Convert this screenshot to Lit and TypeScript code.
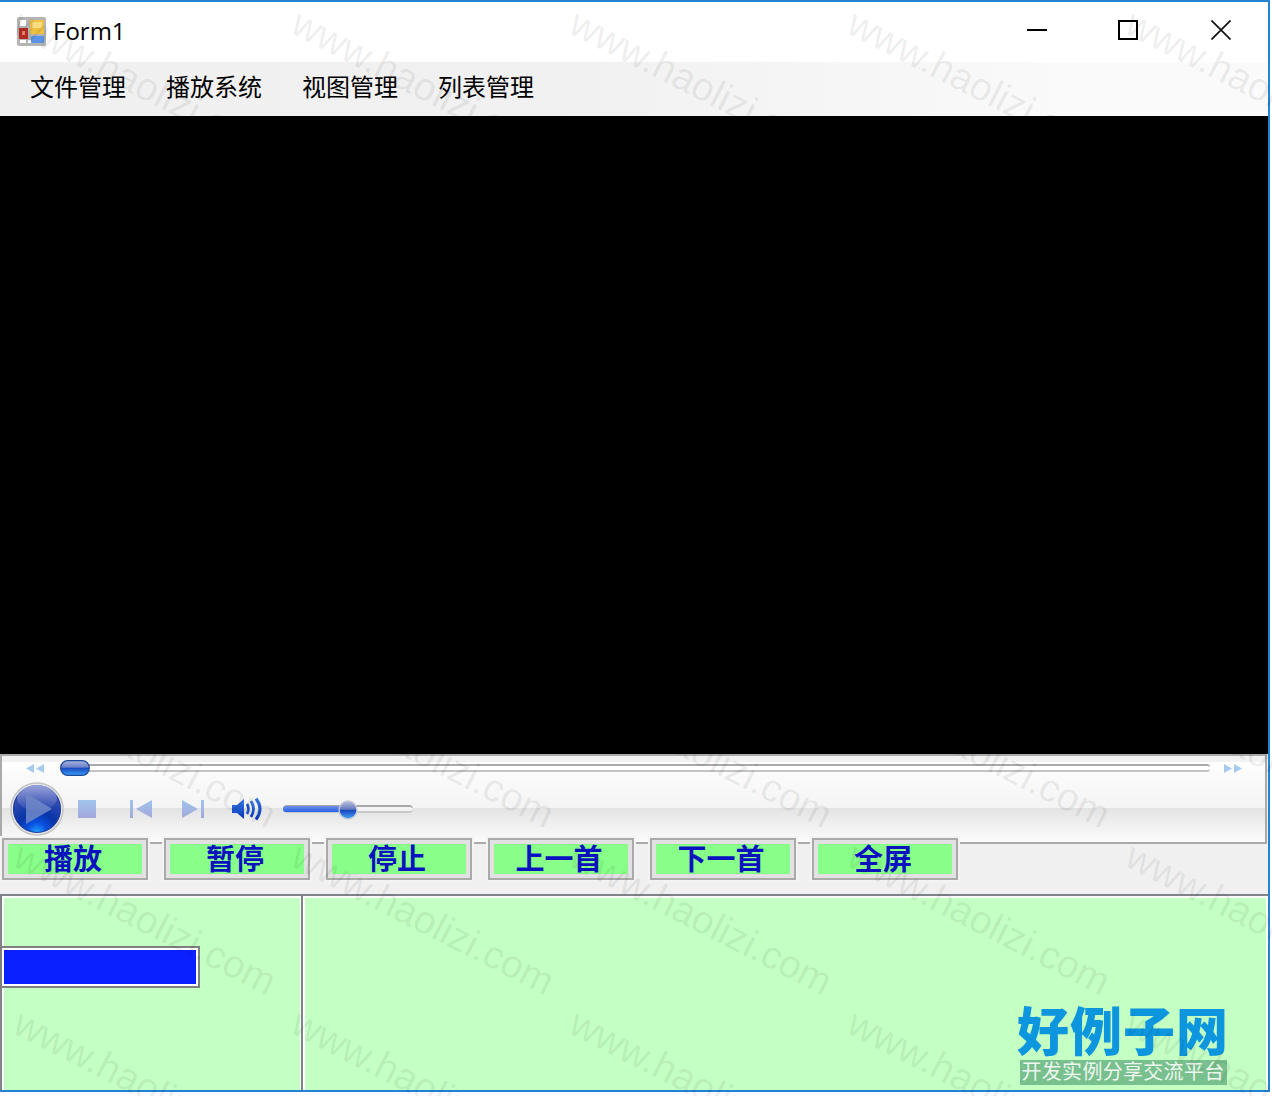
import { LitElement, html, css, svg } from "lit";
import { customElement } from "lit/decorators.js";

const MENUS = ["文件管理", "播放系统", "视图管理", "列表管理"];
const BUTTONS = ["播放", "暂停", "停止", "上一首", "下一首", "全屏"];

const marks: { x: number; y: number }[] = [];
for (const j of [0, 4, 5, 6]) {
  for (let i = 0; i < 5; i++) {
    marks.push({ x: 27 + 278 * i, y: 0 + 166.6 * j });
  }
}

@customElement("app-root")
export class AppRoot extends LitElement {
  static styles = css`
    :host { display: block; position: relative; width: 1272px; height: 1096px; background: #fff; overflow: hidden; }
    .window { width: 1270px; height: 1092px; box-sizing: border-box; border-top: 2px solid #2283d3; border-right: 2px solid #2283d3; border-bottom: 2px solid #2283d3; display: flex; flex-direction: column; background: #f0f0f0; position: relative; }
    .title { height: 60px; flex: none; background: #fff; display: flex; align-items: center; padding: 0 37px 2px 17px; box-sizing: border-box; }
    .title .appicon { width: 29px; height: 29px; flex: none; }
    .title .name { font: 24px "Open Sans", "Noto Sans", sans-serif; color: #000; margin-left: 7px; flex: 1; line-height: 30px; }
    .wc { display: flex; align-items: center; margin-bottom: 2px; }
    .wc svg { display: block; width: 20px; height: 20px; }
    .wc .max { margin-left: 71px; }
    .wc .close { margin-left: 73px; }
    .menu { height: 54px; flex: none; box-sizing: border-box; display: flex; gap: 40px; align-items: center; padding: 0 0 6px 30px; background: linear-gradient(90deg, #f0f0f0 0, #f1f1f1 45%, #fafafa 85%, #fafafa 100%); }
    .menu span { font: 24px/30px "Noto Sans CJK SC", sans-serif; color: #000; width: 96px; white-space: nowrap; }
    .video { height: 638px; flex: none; background: #000; }
    .player { height: 90px; flex: none; box-sizing: border-box; margin-right: 1px; border: 2px solid #aaa; background: linear-gradient(180deg, #f2f2f2 0, #f2f2f2 6px, #fff 6px, #fbfbfb 18px, #f4f4f4 52px, #e3e3e3 52px, #fcfcfc 86px); display: flex; flex-direction: column; }
    .seek { height: 24px; flex: none; display: flex; align-items: center; padding: 0 23px 0 24px; gap: 16px; }
    .seek > svg { width: 18px; height: 9px; flex: none; display: block; }
    .track { flex: 1; height: 4px; border-top: 2px solid #aaa; border-bottom: 2px solid #c4c4c4; background: #fff; border-radius: 3px; position: relative; margin-right: -2px; }
    .thumb { position: absolute; left: 0; top: -6px; width: 30px; height: 16px; display: block; }
    .controls { flex: 1; display: flex; align-items: center; padding: 0 0 4px 8px; }
    .controls > svg { display: block; flex: none; }
    .controls .stop { margin-left: 14px; }
    .controls .prev { margin-left: 34px; }
    .controls .next { margin-left: 30px; }
    .controls .vol { margin-left: 28px; }
    .volbar { margin-left: 21px; width: 130px; height: 4px; border-top: 2px solid #a8a8a8; border-bottom: 2px solid #c8c8c8; border-radius: 4px; background: #f4f4f4; position: relative; }
    .volfill { position: absolute; left: 0; top: -1px; height: 6px; width: 62px; background: linear-gradient(180deg, #6a90e8, #2a60e8); border-radius: 3px 0 0 3px; }
    .volthumb { position: absolute; left: 55px; top: -7px; width: 20px; height: 20px; }
    .buttons { height: 50px; flex: none; display: flex; gap: 16px; padding-left: 2px; position: relative; background: #f0f0f0; }
    .btn { width: 146px; height: 42px; margin-top: -6px; box-sizing: border-box; border: 2px solid #aaa; background: #e1e1e1; padding: 4px; outline: 2px solid #f3f3f3; display: flex; }
    .btn span { flex: 1; background: #88ff88; color: #0a12c0; font: 700 29px/27px "Noto Sans CJK SC", sans-serif; text-align: center; padding-right: 4px; white-space: nowrap; }
    .panels { height: 196px; flex: none; display: flex; }
    .panel { box-sizing: border-box; border-left: 2px solid #808488; border-top: 2px solid #808488; display: flex; }
    .panel.left { width: 301px; flex: none; }
    .panel.right { flex: 1; }
    .fill { flex: 1; background: #c4ffc4; border-left: 2px solid #fff; border-top: 2px solid #fff; }
    .left .fill { border-right: 1px solid #fff; }
    .right .fill { border-right: 2px solid #fff; }
    .progress { box-sizing: border-box; width: 200px; height: 42px; margin: 48px 0 0 -4px; border: 2px solid #808080; padding: 2px; background: #fff; }
    .progress div { height: 100%; background: #0a20ff; }
    .logo { position: absolute; left: 1018px; top: 1001px; width: 210px; display: flex; flex-direction: column; align-items: center; }
    .logo b { font: 900 52px/56px "Noto Sans CJK SC", sans-serif; color: #0d96de; white-space: nowrap; letter-spacing: 1px; }
    .logo i { font: 400 20px/21px "Noto Sans CJK SC", sans-serif; font-style: normal; color: #eef8ee; background: rgba(60, 140, 100, 0.55); width: 207px; height: 25px; margin-top: 3px; text-align: center; white-space: nowrap; letter-spacing: 0.3px; }
    .wm { position: absolute; inset: 0; overflow: hidden; pointer-events: none; }
    .wm span { position: absolute; font: 39px/46px "Liberation Sans", sans-serif; color: rgba(0, 0, 0, 0.08); white-space: nowrap; transform: rotate(27deg); transform-origin: 0 0; }
  `;

  private play() {
    return svg`<svg class="playbtn" width="54" height="54" viewBox="0 0 54 54">
      <defs>
        <radialGradient id="pg" cx="50%" cy="100%" r="85%">
          <stop offset="0" stop-color="#22a4ff"/><stop offset=".25" stop-color="#0a50e0"/><stop offset=".5" stop-color="#0634a8"/><stop offset="1" stop-color="#3a50b0"/>
        </radialGradient>
        <linearGradient id="ph" x1="0" y1="0" x2="0" y2="1">
          <stop offset="0" stop-color="#b4bce8" stop-opacity=".8"/><stop offset="1" stop-color="#6878c8" stop-opacity=".2"/>
        </linearGradient>
      </defs>
      <circle cx="27" cy="27" r="26" fill="#ececec" stroke="#c4c4c4" stroke-width="1.5"/>
      <circle cx="27" cy="27" r="23.5" fill="url(#pg)" stroke="#1c3c9c" stroke-width="1.2"/>
      <ellipse cx="27" cy="16" rx="20" ry="13" fill="url(#ph)"/>
      <path d="M16 11 L42 27 L16 42 Z" fill="#7088c8" opacity=".85"/>
    </svg>`;
  }

  render() {
    return html`
      <div class="window">
        <div class="title">
          <svg class="appicon" viewBox="0 0 29 29">
            <rect width="29" height="29" rx="2" fill="#b4b4b4"/>
            <rect x="3" y="3" width="6" height="6" fill="#fff"/>
            <rect x="3" y="23" width="6" height="3" fill="#fff"/>
            <rect x="11" y="23" width="4" height="3" fill="#fff"/>
            <rect x="2" y="11" width="9" height="11" fill="#b52a22"/>
            <rect x="5" y="14" width="3" height="4" fill="#e08070"/>
            <rect x="13" y="3" width="14" height="14" fill="#f0c040"/>
            <rect x="15" y="5" width="10" height="6" fill="#f8dc80"/>
            <rect x="14" y="19" width="13" height="7" rx="1" fill="#5a94e8"/>
          </svg>
          <span class="name">Form1</span>
          <div class="wc">
            <svg viewBox="0 0 20 20"><rect x="0" y="9" width="20" height="2" fill="#000"/></svg>
            <svg class="max" viewBox="0 0 20 20"><rect x="1" y="1" width="18" height="18" fill="none" stroke="#000" stroke-width="2"/></svg>
            <svg class="close" viewBox="0 0 20 20"><path d="M.5 .5 L19.5 19.5 M19.5 .5 L.5 19.5" stroke="#111" stroke-width="1.7" fill="none"/></svg>
          </div>
        </div>
        <div class="menu">${MENUS.map((m) => html`<span>${m}</span>`)}</div>
        <div class="video"></div>
        <div class="player">
          <div class="seek">
            <svg viewBox="0 0 18 9"><path d="M8 0 V9 L0 4.5 Z M18 0 V9 L10 4.5 Z" fill="#a6cbf0"/></svg>
            <div class="track">
              <svg class="thumb" viewBox="0 0 30 16">
                <defs><linearGradient id="tg" x1="0" y1="0" x2="0" y2="1">
                  <stop offset="0" stop-color="#a8b4e0"/><stop offset=".45" stop-color="#6a80c8"/><stop offset=".5" stop-color="#1a48c0"/><stop offset="1" stop-color="#3a9cf4"/>
                </linearGradient></defs>
                <rect x=".7" y=".7" width="28.6" height="14.6" rx="7" fill="url(#tg)" stroke="#1c4a9c" stroke-width="1.2"/>
              </svg>
            </div>
            <svg viewBox="0 0 18 9"><path d="M0 0 V9 L8 4.5 Z M10 0 V9 L18 4.5 Z" fill="#a6cbf0"/></svg>
          </div>
          <div class="controls">
            ${this.play()}
            <svg class="stop" width="18" height="18" viewBox="0 0 18 18">
              <defs><linearGradient id="ic" x1="0" y1="0" x2="0" y2="1"><stop offset="0" stop-color="#9fc4ec"/><stop offset="1" stop-color="#a4a8dc"/></linearGradient></defs>
              <rect width="18" height="18" fill="url(#ic)"/>
            </svg>
            <svg class="prev" width="22" height="18" viewBox="0 0 22 18"><path d="M0 0 H3 V18 H0 Z M22 0 V18 L6 9 Z" fill="url(#ic)"/></svg>
            <svg class="next" width="22" height="18" viewBox="0 0 22 18"><path d="M0 0 L16 9 L0 18 Z M19 0 H22 V18 H19 Z" fill="url(#ic)"/></svg>
            <svg class="vol" width="30" height="24" viewBox="0 0 30 24">
              <defs><linearGradient id="vg" x1="0" y1="0" x2="0" y2="1"><stop offset="0" stop-color="#3a7ae8"/><stop offset="1" stop-color="#0838b8"/></linearGradient></defs>
              <path d="M0 8 H5 L12 2 V22 L5 16 H0 Z" fill="url(#vg)"/>
              <path d="M15 7 Q18 12 15 17" fill="none" stroke="#1a50c8" stroke-width="2.6"/>
              <path d="M19 4 Q24 12 19 20" fill="none" stroke="url(#vg)" stroke-width="2.8"/>
              <path d="M24 1.5 Q32 12 24 22.5" fill="none" stroke="url(#vg)" stroke-width="3"/>
            </svg>
            <div class="volbar">
              <div class="volfill"></div>
              <svg class="volthumb" viewBox="0 0 20 20">
                <defs><linearGradient id="vt" x1="0" y1="0" x2="0" y2="1"><stop offset="0" stop-color="#b8bce0"/><stop offset=".45" stop-color="#6a7cc0"/><stop offset=".52" stop-color="#1848c0"/><stop offset="1" stop-color="#40a8f8"/></linearGradient></defs>
                <circle cx="10" cy="10" r="9" fill="url(#vt)" stroke="#c8c8d8" stroke-width="1.4"/>
              </svg>
            </div>
          </div>
        </div>
        <div class="buttons">${BUTTONS.map((b) => html`<div class="btn"><span>${b}</span></div>`)}</div>
        <div class="panels">
          <div class="panel left"><div class="fill"><div class="progress"><div></div></div></div></div>
          <div class="panel right"><div class="fill"></div></div>
        </div>
      </div>
      <div class="logo"><b>好例子网</b><i>开发实例分享交流平台</i></div>
      <div class="wm">${marks.map((m) => html`<span style="left:${m.x}px;top:${m.y}px">www.haolizi.com</span>`)}</div>
    `;
  }
}
